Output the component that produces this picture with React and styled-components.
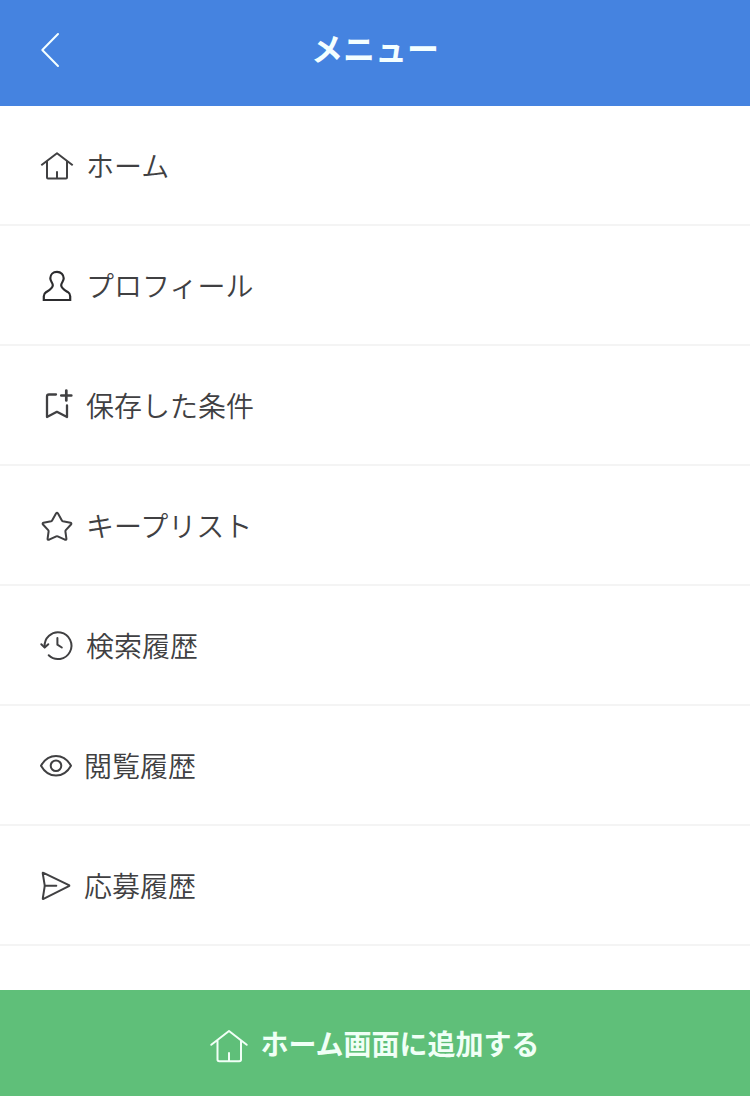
import React from "react";
import styled, { createGlobalStyle } from "styled-components";

const GlobalStyle = createGlobalStyle`
  * { box-sizing: border-box; }
  body {
    margin: 0;
    background: #ffffff;
    color: #404042;
    font-family: "Noto Sans CJK JP", "Liberation Sans", sans-serif;
  }
`;

const Page = styled.div`
  display: flex;
  flex-direction: column;
  min-height: 100vh;
`;

const Header = styled.header`
  display: grid;
  grid-template-columns: 80px 1fr 80px;
  align-items: center;
  height: 106px;
  padding-bottom: 8px;
  background: #4583e0;
  color: #f4ffff;
`;

const BackButton = styled.button`
  display: flex;
  align-items: center;
  height: 96px;
  padding: 0 0 0 40px;
  border: 0;
  background: none;
  color: inherit;
  cursor: pointer;
`;

const Title = styled.h1`
  margin: 0;
  padding-bottom: 4px;
  font-size: 32px;
  line-height: 48px;
  font-weight: 700;
  text-align: center;
`;

const Menu = styled.nav`
  flex: 1;
  padding-bottom: 44px;
`;

const MenuList = styled.ul`
  margin: 0;
  padding: 0;
  list-style: none;
`;

const MenuLink = styled.a`
  display: flex;
  align-items: center;
  gap: 12px;
  height: 120px;
  padding: 0 40px;
  border-bottom: 2px solid #f4f4f4;
  color: inherit;
  font-size: 28px;
  line-height: 40px;
  font-weight: 350;
  text-decoration: none;
`;

const AddButton = styled.button`
  display: flex;
  align-items: center;
  justify-content: center;
  gap: 12px;
  width: 100%;
  height: 106px;
  padding: 0;
  border: 0;
  background: #5fbf79;
  color: #f0fff6;
  font-family: inherit;
  font-size: 28px;
  line-height: 40px;
  font-weight: 700;
  cursor: pointer;
`;

const Glyph = styled.svg`
  flex: none;
  display: block;
  overflow: visible;
  fill: none;
  stroke: currentColor;
  stroke-linecap: ${(p) => p.$cap || "round"};
  stroke-linejoin: ${(p) => p.$join || "round"};
`;

const Icon = ({ size = 34, weight = 2, cap, join, children }) => (
  <Glyph
    width={size}
    height={size}
    viewBox={`0 0 ${size} ${size}`}
    strokeWidth={weight}
    $cap={cap}
    $join={join}
    aria-hidden="true"
  >
    {children}
  </Glyph>
);

const HomeIcon = () => (
  <Icon cap="butt">
    <path d="M1.300 17.300 17 5.300l15.700 12M7 13.500v16q0 1 1 1h18q1 0 1-1v-16M17 23.300v7" />
  </Icon>
);

const ProfileIcon = () => (
  <Icon join="miter" weight={2.2}>
    <path d="M17 3.800C13 3.800 10.300 6.600 10.300 10.300c0 3.200 2.500 4.500 2.500 6.900 0 3-3.300 4.800-6.800 7C4.300 25.300 3.800 26.500 3.800 28.200V32h26.400v-3.800c0-1.700-.5-2.900-2.200-4-3.500-2.200-6.800-4-6.800-7 0-2.400 2.500-3.700 2.500-6.900C23.700 6.600 21 3.800 17 3.800z" stroke="#2c2c2e" />
  </Icon>
);

const SavedIcon = () => (
  <Icon weight={2.3}>
    <path d="M16 6.500H9q-2 0-2 2V29l9.900-5.200L27 29V17.500" />
    <path d="M26.300 2.500v10M21.300 7.500h10" strokeWidth="2.700" />
  </Icon>
);

const StarIcon = () => (
  <Icon>
    <path d="M16 5.500q1-1.500 2 0l3.900 7q.3.600 1 .8l7.600 1.500q1.500.5.500 1.700l-5.200 5.700q-.5.600-.4 1.300l1 7.200q.1 1.600-1.500 1l-7.200-3.400q-.7-.3-1.400 0l-7.200 3.400q-1.600.6-1.500-1l1-7.200q.1-.7-.4-1.300L3 16.500q-1-1.200.5-1.700l7.600-1.500q.7-.2 1-.8z" />
  </Icon>
);

const SearchHistoryIcon = () => (
  <Icon>
    <path d="M4.700 19A13.400 13.400 0 1 1 8.700 27.300" />
    <path d="M1.300 16.300 4.700 19.600 8.300 16.300" />
    <path d="M17.400 10v6.700l4.400 2.800" />
  </Icon>
);

const EyeIcon = () => (
  <Icon size={32}>
    <path d="M1 16.700C4.500 10.500 9.800 7 16 7s11.500 3.500 15 9.700C27.500 22.900 22.200 26.500 16 26.500S4.500 22.900 1 16.700z" />
    <circle cx="16" cy="16.700" r="5.300" />
  </Icon>
);

const SendIcon = () => (
  <Icon size={32}>
    <path d="M2.700 4.200q0-.8.800-.4l25.400 12.400q.9.500 0 1L3.500 29.900q-.8.400-.7-.5l1.800-11.600q.2-1.100 0-2.200zM4.800 16.700h11.500" />
  </Icon>
);

const AddHomeIcon = () => (
  <Icon size={38}>
    <path d="M1.300 20.800 19 7l17.700 13.800M7.500 16.500V35.500q0 1.700 1.700 1.700h20.100q1.700 0 1.700-1.700v-19M19 29v8" />
  </Icon>
);

const items = [
  { label: "ホーム", href: "#home", Symbol: HomeIcon },
  { label: "プロフィール", href: "#profile", Symbol: ProfileIcon },
  { label: "保存した条件", href: "#saved", Symbol: SavedIcon },
  { label: "キープリスト", href: "#keep", Symbol: StarIcon },
  { label: "検索履歴", href: "#searches", Symbol: SearchHistoryIcon },
  { label: "閲覧履歴", href: "#views", Symbol: EyeIcon },
  { label: "応募履歴", href: "#applications", Symbol: SendIcon },
];

export default function App() {
  return (
    <Page>
      <GlobalStyle />
      <Header>
        <BackButton type="button" aria-label="戻る">
          <Icon size={34}>
            <path d="M18 2 2.300 18 18 34" />
          </Icon>
        </BackButton>
        <Title>メニュー</Title>
      </Header>
      <Menu>
        <MenuList>
          {items.map(({ label, href, Symbol }) => (
            <li key={href}>
              <MenuLink href={href}>
                <Symbol />
                <span>{label}</span>
              </MenuLink>
            </li>
          ))}
        </MenuList>
      </Menu>
      <AddButton type="button">
        <AddHomeIcon />
        <span>ホーム画面に追加する</span>
      </AddButton>
    </Page>
  );
}
